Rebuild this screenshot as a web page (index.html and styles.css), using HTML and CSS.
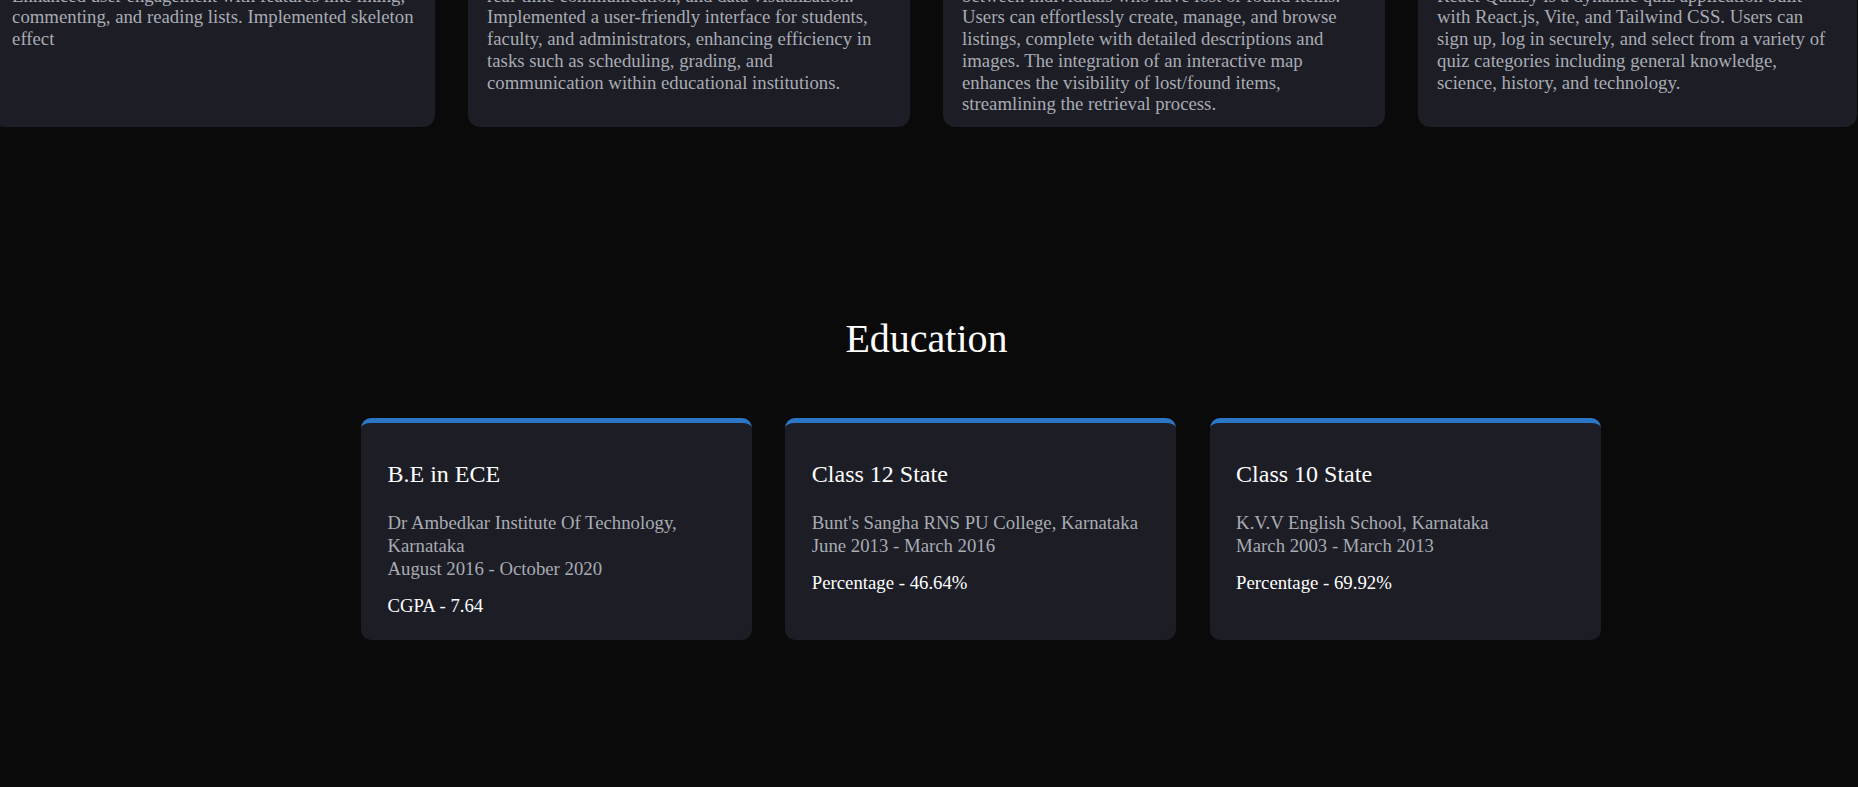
FILE: index.html
```html
<!DOCTYPE html>
<html lang="en">
<head>
<meta charset="utf-8">
<title>Portfolio</title>
<link rel="stylesheet" href="styles.css">
</head>
<body>
<main class="page">
  <section class="projects">
    <div class="track">
      <article class="project-card">
        <p class="project-desc">Enhanced user engagement with features like liking, commenting, and reading lists. Implemented skeleton effect</p>
      </article>
      <article class="project-card">
        <p class="project-desc">real-time communication, and data visualization. Implemented a user-friendly interface for students, faculty, and administrators, enhancing efficiency in tasks such as scheduling, grading, and communication within educational institutions.</p>
      </article>
      <article class="project-card">
        <p class="project-desc">between individuals who have lost or found items. Users can effortlessly create, manage, and browse listings, complete with detailed descriptions and images. The integration of an interactive map enhances the visibility of lost/found items, streamlining the retrieval process.</p>
      </article>
      <article class="project-card project-card--last">
        <p class="project-desc">React Quizzy is a dynamic quiz application built with React.js, Vite, and Tailwind CSS. Users can sign up, log in securely, and select from a variety of quiz categories including general knowledge, science, history, and technology.</p>
      </article>
    </div>
  </section>

  <section class="education">
    <h2 class="section-title">Education</h2>
    <div class="edu-grid">
      <article class="edu-card">
        <h3 class="edu-title">B.E in ECE</h3>
        <p class="edu-info">
          <span class="edu-line">Dr Ambedkar Institute Of Technology, Karnataka</span>
          <span class="edu-line">August 2016 - October 2020</span>
        </p>
        <p class="edu-score">CGPA - 7.64</p>
      </article>
      <article class="edu-card">
        <h3 class="edu-title">Class 12 State</h3>
        <p class="edu-info">
          <span class="edu-line">Bunt's Sangha RNS PU College, Karnataka</span>
          <span class="edu-line">June 2013 - March 2016</span>
        </p>
        <p class="edu-score">Percentage - 46.64%</p>
      </article>
      <article class="edu-card">
        <h3 class="edu-title">Class 10 State</h3>
        <p class="edu-info">
          <span class="edu-line">K.V.V English School, Karnataka</span>
          <span class="edu-line">March 2003 - March 2013</span>
        </p>
        <p class="edu-score">Percentage - 69.92%</p>
      </article>
    </div>
  </section>
</main>
</body>
</html>
```

FILE: styles.css
```css
html, body {
  margin: 0;
  padding: 0;
  background: #0a0a0a;
}

body {
  font-family: "Liberation Serif", "Times New Roman", serif;
  color: #ffffff;
  min-height: 787px;
  overflow: hidden;
}

.page {
  display: flex;
  flex-direction: column;
}

/* Projects carousel (scrolled) */
.projects {
  overflow: hidden;
}

.track {
  display: flex;
  align-items: stretch;
  gap: 33.3px;
  margin-top: -55.5px;
  margin-left: -6.7px;
}

.project-card {
  flex: 0 0 441.7px;
  box-sizing: border-box;
  background: #1c1d25;
  border-radius: 12px;
  padding: 40px 18.75px 11.7px;
}

.project-card--last {
  flex-basis: 439px;
}

.project-desc {
  margin: 0;
  font-size: 18.75px;
  line-height: 21.8px;
  color: #a9acb4;
}

/* Education */
.education {
  display: flex;
  flex-direction: column;
  margin-top: 189.2px;
}

.section-title {
  margin: 0;
  text-align: center;
  font-size: 40px;
  line-height: 46px;
  font-weight: normal;
  color: #ffffff;
  padding-right: 5px;
}

.edu-grid {
  display: grid;
  grid-template-columns: repeat(3, 391px);
  gap: 33.3px;
  margin-top: 55.8px;
  margin-left: 361px;
}

.edu-card {
  background: #1c1d25;
  border-top: 5px solid #2b77c6;
  border-radius: 10px;
  padding: 37.8px 26.5px 23.1px;
}

.edu-title {
  margin: 0 0 22.8px;
  font-size: 24px;
  line-height: 27.6px;
  font-weight: normal;
  color: #ffffff;
}

.edu-info {
  margin: 0;
  font-size: 18.75px;
  line-height: 23px;
  color: #a9acb4;
}

.edu-line {
  display: block;
}

.edu-score {
  margin: 13.7px 0 0;
  font-size: 18.75px;
  line-height: 23px;
  color: #ffffff;
}
```
